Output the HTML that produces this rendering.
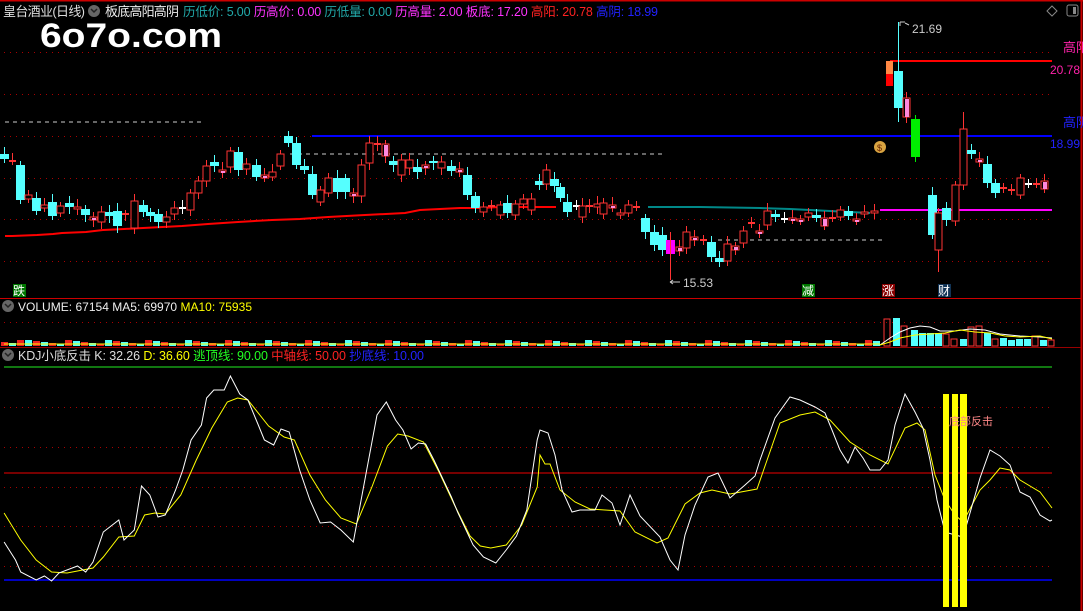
<!DOCTYPE html>
<html><head><meta charset="utf-8"><style>
html,body{margin:0;padding:0;background:#000;width:1083px;height:611px;overflow:hidden}
svg{display:block}
text{font-family:"Liberation Sans","Noto Sans CJK SC",sans-serif;}
</style></head><body>
<svg id="s" width="1083" height="611" xmlns="http://www.w3.org/2000/svg">
<rect width="1083" height="611" fill="#000"/>
<line x1="0" y1="0.5" x2="1083" y2="0.5" stroke="#c00" stroke-width="2"/>
<line x1="1081.5" y1="0" x2="1081.5" y2="611" stroke="#c00" stroke-width="2"/>
<line x1="0" y1="298.5" x2="1081" y2="298.5" stroke="#c00"/>
<line x1="0" y1="347.5" x2="1081" y2="347.5" stroke="#900"/>
<g id="dots" stroke="#a00" stroke-dasharray="1 5"></g>
<!-- header -->
<text x="3" y="16" font-size="13" fill="#ddd" textLength="82">皇台酒业(日线)</text>
<circle cx="94" cy="11" r="6" fill="#666"/><path d="M91 9l3 3 3-3" stroke="#222" stroke-width="1.5" fill="none"/>
<text x="105" y="16" font-size="13" fill="#eee" textLength="74">板底高阳高阴</text>
<text x="183" y="16" font-size="12.5" fill="#2aa" textLength="475"><tspan>历低价: 5.00 </tspan><tspan fill="#f3f">历高价: 0.00 </tspan><tspan fill="#2aa">历低量: 0.00 </tspan><tspan fill="#f3f">历高量: 2.00 </tspan><tspan fill="#f3f">板底: 17.20 </tspan><tspan fill="#f22">高阳: 20.78 </tspan><tspan fill="#22f">高阴: 18.99</tspan></text>
<text x="40" y="47" font-size="34" font-weight="bold" fill="#fff" textLength="182" lengthAdjust="spacingAndGlyphs">6o7o.com</text>
<path d="M1052 6l5 5-5 5-5-5z" stroke="#888" fill="none"/>
<rect x="1067" y="5" width="11" height="11" rx="2" stroke="#888" fill="none"/><rect x="1073" y="7" width="3" height="7" fill="#888"/>
<!-- main lines -->
<line x1="5" y1="122" x2="203" y2="122" stroke="#ccc" stroke-dasharray="4 4"/>
<line x1="290" y1="154" x2="665" y2="154" stroke="#ccc" stroke-dasharray="4 4"/>
<line x1="718" y1="240" x2="885" y2="240" stroke="#ccc" stroke-dasharray="4 4"/>
<line x1="312" y1="136" x2="1052" y2="136" stroke="#00f" stroke-width="2"/>
<line x1="890" y1="61" x2="1052" y2="61" stroke="#f00" stroke-width="2"/>
<line x1="880" y1="210" x2="1052" y2="210" stroke="#f0f" stroke-width="2"/>
<polyline points="5,236 12,236 37,235 53,234 62,233 86,232 103,230 124,229 143,228 182,226 208,224 238,222 272,220 300,219 328,217 365,215 405,213 420,210 460,208 480,208 500,207 556,207" stroke="#f00" stroke-width="2" fill="none"/>
<polyline points="648,207 700,207 760,208 790,209 830,211 870,213" stroke="#088" stroke-width="2" fill="none"/>
<g id="candles"></g>
<text x="912" y="33" font-size="12" fill="#ccc">21.69</text>
<path d="M900 22v4M900 22h5M905 23l4 2" stroke="#ccc" fill="none"/>
<text x="683" y="287" font-size="12" fill="#ccc">15.53</text>
<path d="M670 282h10M670 282l3-2M670 282l3 2" stroke="#ccc" fill="none"/>
<text x="1063" y="52" font-size="13" fill="#f2a">高阳</text>
<text x="1050" y="74" font-size="12" fill="#f2a">20.78</text>
<text x="1063" y="127" font-size="13" fill="#22f">高阴</text>
<text x="1050" y="148" font-size="12" fill="#22f">18.99</text>
<circle cx="880" cy="147" r="6" fill="#d9a441"/><text x="877" y="151" font-size="9" fill="#620">$</text>
<rect x="13" y="284" width="13" height="13" fill="#070"/><text x="13" y="295" font-size="12" fill="#fff">跌</text>
<rect x="802" y="284" width="13" height="13" fill="#070"/><text x="802" y="295" font-size="12" fill="#fff">减</text>
<rect x="882" y="284" width="13" height="13" fill="#800"/><text x="882" y="295" font-size="12" fill="#fff">涨</text>
<rect x="938" y="284" width="13" height="13" fill="#135"/><text x="938" y="295" font-size="12" fill="#fff">财</text>
<!-- volume -->
<circle cx="8" cy="306" r="6" fill="#666"/><path d="M5 304l3 3 3-3" stroke="#222" stroke-width="1.5" fill="none"/>
<text x="18" y="311" font-size="12" fill="#eee" textLength="234">VOLUME: 67154  MA5: 69970  <tspan fill="#ff0">MA10: 75935</tspan></text>
<g id="vol"></g>
<!-- KDJ -->
<circle cx="8" cy="355" r="6" fill="#666"/><path d="M5 353l3 3 3-3" stroke="#222" stroke-width="1.5" fill="none"/>
<text x="18" y="360" font-size="12.5" fill="#ddd" textLength="406">KDJ小底反击  K: 32.26  <tspan fill="#ff0">D: 36.60</tspan>  <tspan fill="#2f2">逃顶线: 90.00</tspan>  <tspan fill="#f22">中轴线: 50.00</tspan>  <tspan fill="#22f">抄底线: 10.00</tspan></text>
<line x1="4" y1="367" x2="1052" y2="367" stroke="#2e2"/>
<line x1="4" y1="473" x2="1052" y2="473" stroke="#e00"/>
<line x1="4" y1="580" x2="1052" y2="580" stroke="#00f" stroke-width="1.5"/>
<polyline class="kd" fill="none" stroke="#ff0" points="4,513 20,540 35,560 50,572 65,573 90,568 100,557 115,537 130,536 140,515 150,513 160,514 175,495 190,460 205,428 220,402 230,398 240,400 260,426 275,437 285,440 300,475 315,500 330,518 345,524 360,487 375,446 385,434 395,436 410,442 425,472 440,505 455,536 465,546 475,548 490,545 505,525 520,487 535,455 545,464 550,464 560,490 575,502 590,509 605,510 620,511 635,532 657,543 668,538 685,504 700,493 712,490 730,494 757,489 780,423 800,415 815,412 830,420 850,442 870,455 888,464 905,428 917,423 925,430 935,475 945,500 955,515 963,522 980,490 990,480 1000,468 1010,470 1020,480 1040,492 1052,508"/>
<polyline class="kd" fill="none" stroke="#fff" points="4,542 15,560 20,572 35,580 43,576 50,581 57,573 75,566 83,572 90,562 100,532 115,520 120,540 130,530 137,486 145,495 153,517 160,515 170,490 177,470 185,440 195,425 200,398 207,390 217,390 223,376 232,394 240,400 250,425 256,440 265,445 272,429 280,432 290,470 300,500 310,523 320,522 330,530 342,542 355,470 365,415 374,402 383,420 390,430 398,449 405,443 412,444 420,460 437,497 443,512 458,545 468,557 480,563 490,550 500,536 510,510 520,440 530,430 540,430 548,433 555,455 562,490 572,512 580,510 595,510 602,495 612,503 620,525 630,495 640,516 660,537 670,560 678,570 685,535 695,505 708,477 718,473 730,498 745,485 755,476 760,460 775,418 790,397 800,400 815,407 825,413 832,430 840,450 848,463 855,447 863,458 870,470 880,470 888,460 895,425 905,394 915,412 923,428 930,460 937,500 945,532 955,535 963,537 970,513 980,478 990,450 1000,456 1010,465 1020,492 1030,497 1040,515 1050,521 1052,520"/>
<g id="kdjbars">
<rect x="943" y="394" width="6" height="213" fill="#ff0"/>
<rect x="952" y="394" width="6" height="213" fill="#ff0"/>
<rect x="960" y="394" width="7" height="213" fill="#ff0"/>
<text x="949" y="425" font-size="11" fill="#f88">底部反击</text>
</g>
</svg>
<script>
var NS="http://www.w3.org/2000/svg",s=document.getElementById('s');
function el(p,t,a){var e=document.createElementNS(NS,t);for(var k in a)e.setAttribute(k,a[k]);p.appendChild(e);return e;}
Array.prototype.forEach.call(document.querySelectorAll('.kd'),function(pl){
 var pts=pl.getAttribute('points').trim().split(/\s+/).map(function(p){var a=p.split(',');var x=+a[0];
  if(x<=523)x=x*1.033;else if(x<540)x=540;return x.toFixed(1)+','+a[1];});
 pl.setAttribute('points',pts.join(' '));});
var d=document.getElementById('dots');
[52,94,136,178,219,261,322,407,447,487,526,566].forEach(function(y){el(d,'line',{x1:4,y1:y+.5,x2:1052,y2:y+.5});});
var C=[[4,'c',154,159],[12,'x',161,161],[20,'c',165,200],[28,'r',195,199],[36,'c',198,211],[44,'r',205,208],[52,'c',202,216],[60,'r',206,213],[69,'c',203,207],[77,'r',207,208],[85,'c',209,215],[93,'p',217,220],[101,'r',212,222],[109,'c',212,216],[117,'c',211,226],[125,'x',214,214],[134,'r',201,228],[143,'c',205,212],[150,'c',212,216],[158,'c',214,222],[166,'r',217,222],[174,'r',208,214],[182,'w',208,208],[190,'r',193,210],[198,'r',181,193],[206,'r',166,181],[214,'c',162,166],[222,'p',170,172],[230,'r',151,167],[238,'c',152,170],[246,'r',164,169],[256,'c',165,177],[264,'p',175,178],[272,'r',172,177],[280,'r',154,166],[288,'c',136,143],[296,'c',143,165],[304,'c',166,170],[312,'c',174,195],[320,'r',190,202],[328,'r',178,193],[337,'c',178,192],[345,'c',178,192],[353,'p',193,196],[361,'r',165,196],[369,'r',143,163],[377,'x',144,144],[385,'p',144,156],[393,'c',161,165],[401,'r',160,175],[409,'r',160,168],[417,'c',167,172],[425,'p',165,168],[433,'c',161,163],[441,'r',162,168],[451,'c',166,171],[459,'p',169,172],[467,'c',175,195],[475,'c',196,208],[483,'r',207,212],[491,'x',206,206],[500,'r',205,215],[507,'c',203,213],[515,'r',204,215],[523,'r',199,204],[531,'r',199,210],[539,'c',181,185],[546,'r',170,184],[554,'c',179,186],[560,'c',187,198],[567,'c',202,212],[576,'w',206,206],[582,'r',206,217],[589,'x',206,206],[597,'r',204,207],[603,'r',203,214],[612,'p',205,208],[620,'r',213,215],[628,'r',205,213],[636,'x',207,207],[645,'c',218,232],[654,'c',232,245],[662,'c',235,250],[670,'m',240,254],[679,'p',247,251],[686,'r',232,248],[694,'p',237,240],[703,'x',240,240],[711,'c',242,257],[719,'c',258,262],[727,'r',244,261],[735,'p',246,250],[743,'r',231,243],[751,'x',223,223],[759,'p',231,233],[767,'r',211,225],[775,'c',214,217],[784,'w',219,219],[792,'p',218,220],[800,'p',219,221],[808,'r',213,217],[816,'c',215,218],[824,'p',218,226],[832,'x',218,218],[840,'r',210,217],[848,'c',211,216],[856,'p',219,221],[864,'r',212,214],[874,'r',211,213],[898,'c',71,108],[906,'p',98,117],[915,'g',119,157],[932,'c',195,235],[938,'r',213,250],[946,'c',208,220],[955,'r',185,221],[963,'r',129,185],[971,'c',150,154],[979,'p',159,162],[987,'c',164,183],[995,'c',183,193],[1003,'x',188,188],[1011,'x',190,190],[1020,'r',178,195],[1028,'w',184,184],[1036,'x',184,184],[1044,'p',181,189]];
var g=document.getElementById('candles');
C.forEach(function(c){var x=c[0],t=c[1],a=c[2],b=c[3];var col={c:'#5ff',r:'#f33',p:'#f33',x:'#f33',w:'#fff',m:'#f0f',g:'#0e0'}[t];
 var hi=a-4-(x*7%5),lo=b+4+(x*3%4);
 el(g,'line',{x1:x+.5,y1:hi,x2:x+.5,y2:lo,stroke:col});
 if(t=='x'||t=='w'){el(g,'rect',{x:x-3,y:a-1,width:7,height:2,fill:col});return;}
 if(t=='r'||t=='p'){el(g,'rect',{x:x-3,y:a,width:7,height:Math.max(b-a,2),fill:'#000',stroke:'#f33'});if(t=='p')el(g,'rect',{x:x-1,y:a+1,width:4,height:Math.max(b-a-1,2),fill:'#f8d'});return;}
 el(g,'rect',{x:x-4,y:a,width:9,height:Math.max(b-a,2),fill:col});});
el(g,'line',{x1:898.5,y1:22,x2:898.5,y2:122,stroke:'#5ff'});
el(g,'rect',{x:886,y:61,width:7,height:13,fill:'#f84'});el(g,'rect',{x:886,y:74,width:7,height:12,fill:'#f00'});
el(g,'line',{x1:670.5,y1:232,x2:670.5,y2:280,stroke:'#f33'});
el(g,'line',{x1:938.5,y1:250,x2:938.5,y2:272,stroke:'#f33'});
el(g,'line',{x1:963.5,y1:112,x2:963.5,y2:129,stroke:'#f33'});
var v=document.getElementById('vol');
for(var x=4;x<880;x+=8){var h=2+((x*13)%5);if(x==20||x==288||x==312)h=6;el(v,'rect',{x:x-3,y:346-h,width:7,height:h,fill:(x/8|0)%2?'#5ff':'#e22'});}
el(v,'polyline',{points:'4,344 880,344',stroke:'#ff0',fill:'none'});
var V=[[887,'r',319],[896,'c',318],[904,'r',326],[914,'c',330],[922,'c',333],[930,'c',333],[938,'c',333],[946,'r',334],[954,'r',339],[963,'c',339],[971,'r',327],[979,'r',326],[987,'c',333],[995,'r',339],[1003,'c',338],[1011,'c',340],[1019,'c',339],[1027,'c',339],[1035,'r',336],[1043,'c',340],[1051,'r',340]];
V.forEach(function(b){if(b[1]=='c')el(v,'rect',{x:b[0]-3,y:b[2],width:7,height:346-b[2],fill:'#5ff'});else el(v,'rect',{x:b[0]-3,y:b[2],width:6,height:346-b[2],fill:'none',stroke:'#f33'});});
el(v,'polyline',{points:'880,345 890,338 900,332 910,328 920,326 930,327 940,331 955,331 970,329 985,330 1000,334 1020,336 1040,337 1052,338',stroke:'#fff',fill:'none'});
el(v,'polyline',{points:'880,345 890,342 900,338 915,335 930,334 945,333 960,330 975,332 990,333 1005,336 1020,337 1040,336 1052,339',stroke:'#ff0',fill:'none'});
</script>
</body></html>
